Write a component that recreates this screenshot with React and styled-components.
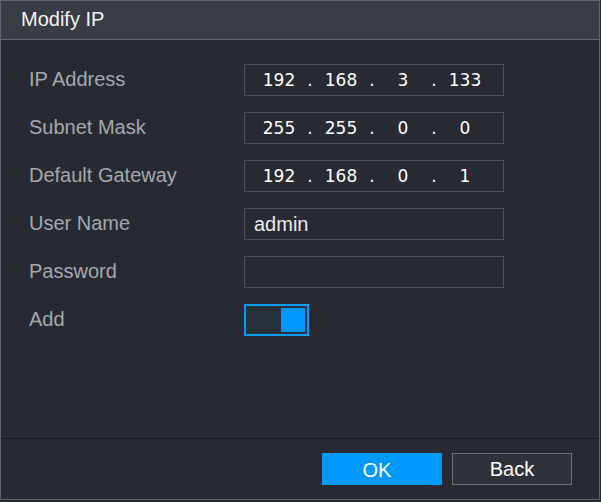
import React from 'react';
import styled, { createGlobalStyle } from 'styled-components';

const GlobalStyle = createGlobalStyle`
  html, body {
    margin: 0;
    padding: 0;
    background: #282a33;
  }
  * { box-sizing: border-box; }
`

const Dialog = styled.div`
  width: 600px;
  height: 500px;
  border: 1px solid #5f636b;
  background: #282a33;
  display: flex;
  flex-direction: column;
  font-family: "Liberation Sans", Arial, sans-serif;
`

const TitleBar = styled.div`
  height: 39px;
  background: #393b45;
  border-bottom: 1px solid #666a72;
  display: flex;
  align-items: center;
  padding: 0 0 1px 20px;
`

const Title = styled.h1`
  margin: 0;
  font-size: 20px;
  font-weight: normal;
  color: #f2f2f2;
`

const Body = styled.div`
  flex: 1;
  padding: 24px 0 0 28px;
  display: flex;
  flex-direction: column;
  gap: 16px;
`

const Row = styled.div`
  display: flex;
  align-items: center;
  height: 32px;
`

const Label = styled.div`
  width: 215px;
  font-size: 20px;
  color: #a4a8ae;
  padding-bottom: 2px;
`

const Field = styled.div`
  width: 260px;
  height: 32px;
  border: 1px solid #4d525a;
  display: flex;
  align-items: center;
  padding-left: 9px;
  font-size: 20px;
  color: #ececec;
`

const IpField = styled(Field)`
  font-family: "DejaVu Sans", sans-serif;
  font-size: 17px;
  color: #ffffff;
  align-items: baseline;
  padding-top: 5px;
`

const Segment = styled.span`
  width: 50px;
  text-align: center;
`

const Dot = styled.span`
  width: 12px;
  text-align: center;
`

const Toggle = styled.div`
  width: 65px;
  height: 32px;
  border: 2px solid #0a9cf5;
  background: #283039;
  display: flex;
  justify-content: ${p => (p.$on ? 'flex-end' : 'flex-start')};
  padding: 2px;
`

const Knob = styled.div`
  width: 24px;
  height: 24px;
  background: #0099ff;
`

const Footer = styled.div`
  height: 61px;
  border-top: 1px solid #17181d;
  display: flex;
  justify-content: flex-end;
  align-items: flex-start;
  gap: 10px;
  padding: 14px 27px 0 0;
`

const Button = styled.button`
  width: 120px;
  height: 32px;
  font-family: "Liberation Sans", Arial, sans-serif;
  font-size: 20px;
  color: #ffffff;
  background: ${p => (p.$primary ? '#0099ff' : '#30323b')};
  border: 1px solid ${p => (p.$primary ? '#0099ff' : '#6b6f76')};
  padding: ${p => (p.$primary ? '3px 10px 0 0' : '0')};
  cursor: pointer;
`

const IpInput = ({ value }) => {
  const parts = value.split('.');
  return (
    <IpField>
      {parts.map((p, i) => (
        <React.Fragment key={i}>
          {i > 0 && <Dot>.</Dot>}
          <Segment>{p}</Segment>
        </React.Fragment>
      ))}
    </IpField>
  );
};

const App = () => {
  return (
    <>
      <GlobalStyle />
      <Dialog>
        <TitleBar>
          <Title>Modify IP</Title>
        </TitleBar>
        <Body>
          <Row>
            <Label>IP Address</Label>
            <IpInput value="192.168.3.133" />
          </Row>
          <Row>
            <Label>Subnet Mask</Label>
            <IpInput value="255.255.0.0" />
          </Row>
          <Row>
            <Label>Default Gateway</Label>
            <IpInput value="192.168.0.1" />
          </Row>
          <Row>
            <Label>User Name</Label>
            <Field>admin</Field>
          </Row>
          <Row>
            <Label>Password</Label>
            <Field />
          </Row>
          <Row>
            <Label>Add</Label>
            <Toggle $on>
              <Knob />
            </Toggle>
          </Row>
        </Body>
        <Footer>
          <Button $primary>OK</Button>
          <Button>Back</Button>
        </Footer>
      </Dialog>
    </>
  );
};

export default App;
